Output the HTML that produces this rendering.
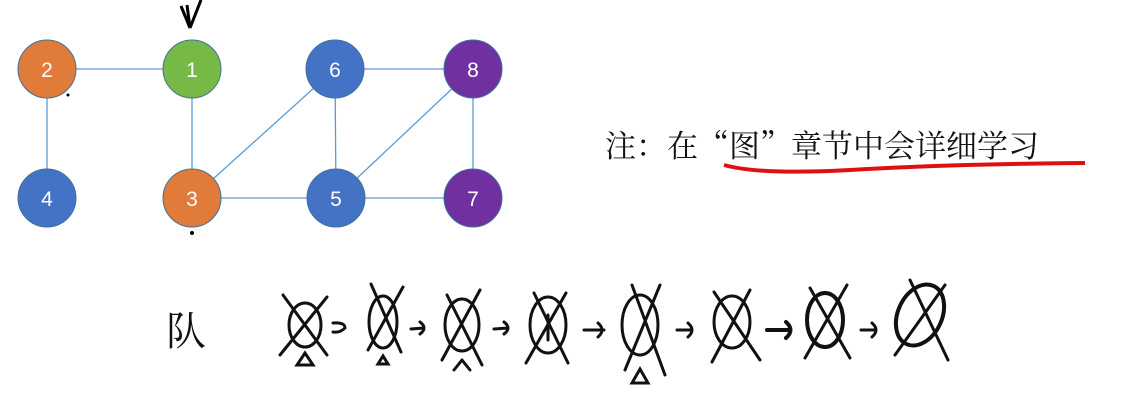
<!DOCTYPE html>
<html><head><meta charset="utf-8"><style>
body{margin:0;background:#fff;width:1128px;height:414px;overflow:hidden;font-family:"Liberation Sans",sans-serif}
</style></head><body>
<svg width="1128" height="414" xmlns="http://www.w3.org/2000/svg">
<g stroke="#5b9bd5" stroke-width="1.3">
<line x1="47" y1="69" x2="192" y2="69"/><line x1="47" y1="69" x2="47" y2="198"/>
<line x1="192" y1="69" x2="192" y2="198"/><line x1="192" y1="198" x2="336" y2="198"/>
<line x1="192" y1="198" x2="335" y2="69"/><line x1="335" y1="69" x2="473" y2="69"/>
<line x1="335" y1="69" x2="336" y2="198"/><line x1="336" y1="198" x2="473" y2="69"/>
<line x1="336" y1="198" x2="473" y2="198"/><line x1="473" y1="69" x2="473" y2="198"/>
</g>
<g stroke="#41719c" stroke-width="1">
<circle cx="47" cy="69" r="29" fill="#e07b39"/><circle cx="192" cy="69" r="29" fill="#76b947"/>
<circle cx="335" cy="69" r="29" fill="#4472c4"/><circle cx="473" cy="69" r="29" fill="#7030a0"/>
<circle cx="47" cy="198" r="29" fill="#4472c4"/><circle cx="192" cy="198" r="29" fill="#e07b39"/>
<circle cx="336" cy="198" r="29" fill="#4472c4"/><circle cx="473" cy="198" r="29" fill="#7030a0"/>
</g>
<g font-size="21" text-anchor="middle" fill="#fff">
<text x="47" y="77">2</text><text x="192" y="77">1</text><text x="335" y="77">6</text><text x="473" y="77">8</text>
<text x="47" y="206">4</text><text x="192" y="206">3</text><text x="336" y="206">5</text><text x="473" y="206">7</text>
</g>
<path d="M190 28 L181 6 M190 28 L201 0 M190 28 L187 5" stroke="#000" stroke-width="3" fill="none"/>
<circle cx="68" cy="95" r="1.5"/><circle cx="192" cy="233" r="2"/>
<text x="605" y="157" font-size="31" font-family="'Noto Serif CJK SC',serif" fill="#111">注：在“图”章节中会详细学习</text>
<path d="M724 165 Q760 175 850 170 Q950 164 1085 163" stroke="#e01010" stroke-width="4" fill="none"/>
<text x="166" y="345" font-size="40" font-family="'Noto Serif CJK SC',serif" fill="#111">队</text>
<g stroke="#111" stroke-width="3" fill="none" stroke-linecap="round">
<g transform="translate(305,325)"><ellipse rx="16" ry="22"/><path d="M-22 -30 L22 30 M22 -28 L-25 30 M-8 40 L8 40 L0 28Z"/></g>
<path d="M333 323 Q345 322 345 328 Q340 333 333 332"/>
<g transform="translate(383,322)"><ellipse rx="14" ry="26"/><path d="M-12 -38 L18 30 M20 -35 L-15 28 M-5 42 L5 42 L0 34Z"/></g>
<path d="M411 329 L424 328 M420 322 Q428 328 420 334"/>
<g transform="translate(462,325)"><ellipse rx="17" ry="26"/><path d="M-15 -30 L20 40 M18 -35 L-20 35 M-8 45 L0 35 M0 35 L8 45"/></g>
<path d="M494 329 L508 328 M504 322 Q512 328 504 334"/>
<g transform="translate(548,325)"><ellipse rx="18" ry="28"/><path d="M-14 -32 L20 38 M18 -32 L-22 38 M0 -10 L0 15"/></g>
<path d="M584 330 L604 330 M598 323 Q606 330 598 337"/>
<g transform="translate(640,325)"><ellipse rx="18" ry="30"/><path d="M-8 -40 L25 50 M20 -40 L-15 45 M-8 58 L8 58 L0 44Z"/></g>
<path d="M677 330 L692 330 M688 323 Q696 330 688 337"/>
<g transform="translate(732,322)"><ellipse rx="18" ry="26"/><path d="M-18 -30 L28 38 M18 -32 L-20 40"/></g>
<path d="M767 330 L790 330 M786 322 Q795 330 786 338" stroke-width="4"/>
<g transform="translate(825,320)"><ellipse rx="18" ry="27" stroke-width="4"/><path d="M-15 -32 L25 38 M22 -35 L-20 38"/></g>
<path d="M861 330 L876 330 M872 323 Q880 330 872 337"/>
<g transform="translate(920,315)"><ellipse rx="22" ry="32" transform="rotate(25)" stroke-width="4"/><path d="M-10 -35 L28 45 M25 -30 L-25 40"/></g>
</g>
</svg>
</body></html>
